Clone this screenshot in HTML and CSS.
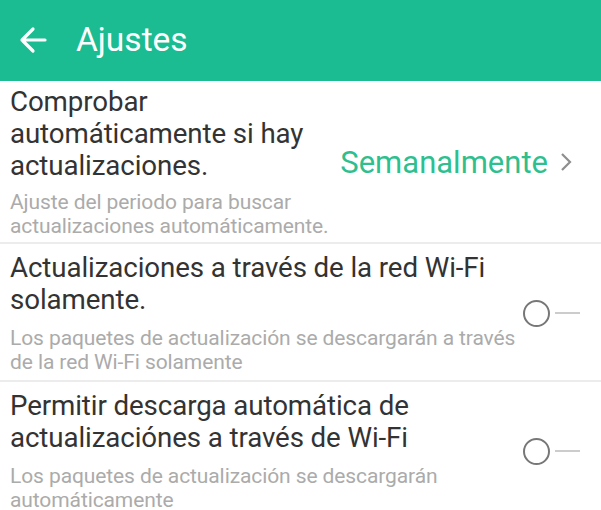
FILE: index.html
```html
<!DOCTYPE html>
<html lang="es">
<head>
<meta charset="utf-8">
<title>Ajustes</title>
<link rel="stylesheet" href="styles.css">
</head>
<body>
<header class="appbar">
  <svg class="back" width="28" height="28" viewBox="0 0 28 28" aria-hidden="true">
    <path d="M26 14H3M14 3L3 14l11 11" fill="none" stroke="#fff" stroke-width="3.2" stroke-linecap="round" stroke-linejoin="round"/>
  </svg>
  <h1 class="title">Ajustes</h1>
</header>
<main class="list">
  <section class="row row-first">
    <div class="text">
      <div class="main">Comprobar<br>automáticamente si hay<br>actualizaciones.</div>
      <div class="sub">Ajuste del periodo para buscar<br>actualizaciones automáticamente.</div>
    </div>
    <div class="value">Semanalmente
      <svg class="chev" width="12" height="20" viewBox="0 0 12 20" aria-hidden="true"><path d="M2 2l8 8-8 8" fill="none" stroke="#8e8e8e" stroke-width="2.2"/></svg>
    </div>
  </section>
  <section class="row">
    <div class="text">
      <div class="main">Actualizaciones a través de la red Wi-Fi<br>solamente.</div>
      <div class="sub">Los paquetes de actualización se descargarán a través<br>de la red Wi-Fi solamente</div>
    </div>
    <div class="switch"><span class="knob"></span><span class="track"></span></div>
  </section>
  <section class="row">
    <div class="text">
      <div class="main">Permitir descarga automática de<br>actualizaciónes a través de Wi-Fi</div>
      <div class="sub">Los paquetes de actualización se descargarán<br>automáticamente</div>
    </div>
    <div class="switch"><span class="knob"></span><span class="track"></span></div>
  </section>
</main>
</body>
</html>
```
FILE: styles.css
```css
* { box-sizing: border-box; }
html, body { margin: 0; padding: 0; background: #fff; }
body { font-family: Roboto, "Noto Sans", sans-serif; width: 601px; height: 510px; overflow: hidden; }
.appbar {
  height: 81px;
  background: #1bbc91;
  display: flex;
  align-items: center;
  padding-left: 19px;
  gap: 29px;
}
.back { display: block; margin-top: -2px; }
.title { margin: 0; color: #fff; font-weight: 400; font-size: 33.5px; margin-top: -2px; }
.list { display: flex; flex-direction: column; }
.row {
  display: flex;
  align-items: center;
  justify-content: space-between;
  padding: 8px 0 6px 10px;
  border-bottom: 2px solid #ececec;
}
.row:last-child { border-bottom: none; }
.row-first { padding: 5px 0 4px 10px; }
.text { display: flex; flex-direction: column; }
.main { color: #333; font-size: 27.7px; line-height: 32px; letter-spacing: -0.1px; }
.sub { color: #ababab; font-size: 21px; line-height: 24px; margin-top: 10px; letter-spacing: -0.1px; }
.row-first .sub { margin-top: 8px; }
.value {
  display: flex; align-items: center; gap: 12px;
  color: #2fbf8e; font-size: 31px;
  margin-right: 29px; margin-top: 0;
}
.chev { display: block; }
.switch { display: flex; align-items: center; margin-right: 21px; }
.knob { width: 27px; height: 27px; border: 2.5px solid #777; border-radius: 50%; }
.track { width: 25px; height: 2px; background: #ccc; margin-left: 5px; }
```
